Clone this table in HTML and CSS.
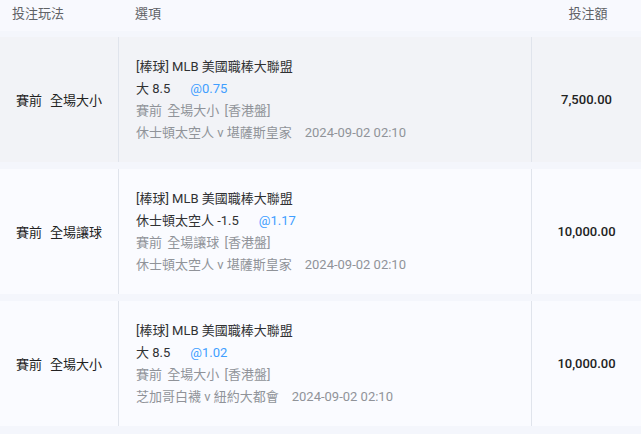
FILE: index.html
```html
<!DOCTYPE html>
<html lang="zh-Hant">
<head>
<meta charset="utf-8">
<title>投注記錄</title>
<link rel="stylesheet" href="styles.css">
</head>
<body>
<div class="table">
  <div class="thead">
    <div class="th th-type">投注玩法</div>
    <div class="th th-opt">選項</div>
    <div class="th th-amt">投注額</div>
  </div>
  <div class="tbody">
    <div class="row row-hover">
      <div class="cell c-type"><span class="pre">賽前</span>全場大小</div>
      <div class="cell c-opt">
        <div class="l1">[棒球] MLB 美國職棒大聯盟</div>
        <div class="l2">大 8.5<span class="odds">@0.75</span></div>
        <div class="l3">賽前 全場大小 [香港盤]</div>
        <div class="l4">休士頓太空人 v 堪薩斯皇家<span class="time">2024-09-02 02:10</span></div>
      </div>
      <div class="cell c-amt">7,500.00</div>
    </div>
    <div class="row">
      <div class="cell c-type"><span class="pre">賽前</span>全場讓球</div>
      <div class="cell c-opt">
        <div class="l1">[棒球] MLB 美國職棒大聯盟</div>
        <div class="l2">休士頓太空人 -1.5<span class="odds">@1.17</span></div>
        <div class="l3">賽前 全場讓球 [香港盤]</div>
        <div class="l4">休士頓太空人 v 堪薩斯皇家<span class="time">2024-09-02 02:10</span></div>
      </div>
      <div class="cell c-amt">10,000.00</div>
    </div>
    <div class="row">
      <div class="cell c-type"><span class="pre">賽前</span>全場大小</div>
      <div class="cell c-opt">
        <div class="l1">[棒球] MLB 美國職棒大聯盟</div>
        <div class="l2">大 8.5<span class="odds">@1.02</span></div>
        <div class="l3">賽前 全場大小 [香港盤]</div>
        <div class="l4">芝加哥白襪 v 紐約大都會<span class="time">2024-09-02 02:10</span></div>
      </div>
      <div class="cell c-amt">10,000.00</div>
    </div>
  </div>
</div>
</body>
</html>
```
FILE: styles.css
```css
html, body {
  margin: 0;
  padding: 0;
}
body {
  background: #f4f6fc;
  font-family: Roboto, "Noto Sans CJK TC", sans-serif;
  font-size: 13px;
  color: #303133;
  width: 641px;
  height: 434px;
  overflow: hidden;
}
.table {
  display: flex;
  flex-direction: column;
}
.thead {
  display: grid;
  grid-template-columns: 119px 413px 1fr;
  height: 31px;
  background: #f8f9fe;
  color: #606266;
}
.th {
  line-height: 18px;
  padding-top: 5px;
}
.th-type { padding-left: 12px; }
.th-opt { padding-left: 16px; }
.th-amt { text-align: center; padding-left: 3px; }
.tbody {
  display: flex;
  flex-direction: column;
  gap: 7px;
  padding-top: 6px;
}
.row {
  display: grid;
  grid-template-columns: 119px 413px 1fr;
  height: 125px;
  background: #fafbff;
}
.row-hover {
  background: #f2f3f7;
}
.cell {
  display: flex;
  align-items: center;
}
.c-type {
  justify-content: center;
  border-right: 1px solid #e0e4ec;
  color: #222;
}
.pre { margin-right: 8px; }
.c-opt {
  flex-direction: column;
  align-items: flex-start;
  justify-content: center;
  padding-left: 17px;
  border-right: 1px solid #e0e4ec;
  line-height: 22px;
}
.l1, .l2 { color: #303133; }
.l3, .l4 { color: #909399; }
.l3 { word-spacing: 2px; }
.odds {
  color: #409eff;
  margin-left: 20px;
}
.time { margin-left: 13px; }
.c-amt {
  justify-content: center;
  color: #222;
  font-weight: 500;
}
```
